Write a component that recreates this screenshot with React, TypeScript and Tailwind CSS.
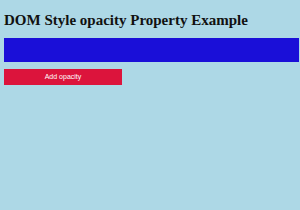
export default function App() {
  return (
    <div className="w-[300px] h-[210px] bg-[#add8e6] pl-[4px] pt-[10px] overflow-hidden">
      <h1 className="text-[15px] font-bold leading-[20px] text-[#111111] m-0 whitespace-nowrap" style={{ fontFamily: '"Liberation Serif", "Times New Roman", serif' }}>
        DOM Style opacity Property Example
      </h1>
      <div className="mt-[8px] h-[24px] w-[295px] bg-[#1a0fd8]"></div>
      <button className="mt-[7px] w-[118px] h-[16px] bg-[#dc143c] text-white text-[7px] flex items-center justify-center" style={{ fontFamily: '"Liberation Sans", Arial, sans-serif' }}>
        Add opacity
      </button>
    </div>
  );
}
